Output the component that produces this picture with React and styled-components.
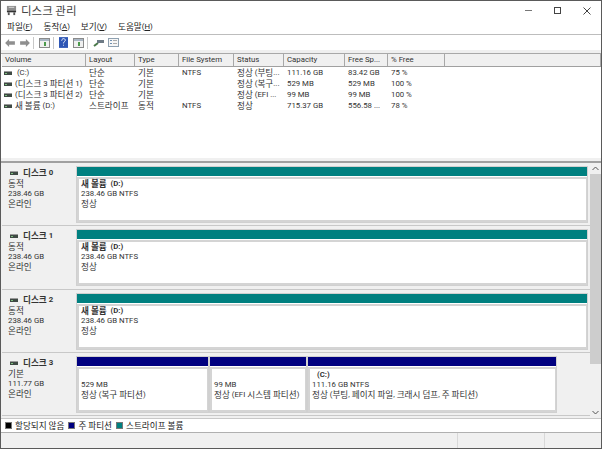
import React from "react";
import styled, { createGlobalStyle } from "styled-components";

const Global = createGlobalStyle`
  html, body { margin: 0; padding: 0; background: #fff; }
  #root { width: 602px; height: 449px; overflow: hidden; }
`;

const Window = styled.div`
  width: 602px;
  height: 449px;
  box-sizing: border-box;
  border: 1px solid #5a5a5a;
  display: flex;
  flex-direction: column;
  background: #fff;
  color: #333;
  font-family: Roboto, "Noto Sans CJK KR", sans-serif;
  font-size: 7.8px;
  line-height: 11px;
  overflow: hidden;
`;

/* hangul in the shot runs wider than the latin next to it */
const Ko = styled.span`
  font-family: "Noto Sans CJK KR", sans-serif;
  font-size: 8.6px;
  line-height: 0.9;
  vertical-align: -0.6px;
`;

const Txt = ({ children }) =>
  String(children)
    .split(/([\uAC00-\uD7A3]+)/)
    .map((s, i) => (i % 2 ? <Ko key={i}>{s}</Ko> : s));

const TitleBar = styled.div`
  height: 19px;
  display: flex;
  align-items: center;
  padding: 0 0 0 5px;
  flex: none;
`;

const TitleText = styled.span`
  flex: 1;
  margin-left: 4px;
  font-family: "Noto Sans CJK KR", sans-serif;
  font-size: 11.5px;
  color: #444;
`;

const WinBtn = styled.div`
  width: 29px;
  height: 19px;
  display: flex;
  align-items: center;
  justify-content: center;
`;

const MenuBar = styled.div`
  height: 15px;
  box-sizing: border-box;
  display: flex;
  align-items: center;
  gap: 11px;
  padding: 0 0 1px 6px;
  border-bottom: 1px solid #bdbdbd;
  flex: none;
  color: #222;
  u { text-decoration-thickness: 1px; }
`;

const Toolbar = styled.div`
  height: 15px;
  display: flex;
  align-items: center;
  padding-left: 1px;
  flex: none;
`;

const ToolBtn = styled.div`
  width: 15px;
  height: 15px;
  display: flex;
  align-items: center;
  justify-content: center;
  flex: none;
`;

const ToolSep = styled.div`
  width: 1px;
  height: 12px;
  background: #c8c8c8;
  margin: 0 2.5px 0 1px;
  flex: none;
`;

const VolumePane = styled.div`
  height: 105px;
  flex: none;
  border-top: 3px solid #efefef;
  box-shadow: inset 0 1px 0 #a8a8a8;
`;

const colTemplate = "84px 49px 44px 55px 50px 61px 43px 57px 1fr";

const HeaderRow = styled.div`
  height: 13px;
  margin: 1px 0 0 1px;
  display: grid;
  grid-template-columns: ${colTemplate};
  background: #f0f0f0;
  border-bottom: 1px solid #a0a0a0;
  box-sizing: border-box;
`;

const HeaderCell = styled.div`
  padding-left: 3px;
  border-right: 1px solid #a8a8a8;
  line-height: 12px;
  white-space: nowrap;
  color: #333;
`;

const VolumeRow = styled.div`
  height: 11px;
  margin-left: 1px;
  display: grid;
  grid-template-columns: ${colTemplate};
`;

const Cell = styled.div`
  padding-left: ${(p) => (p.$first ? 2 : 3)}px;
  white-space: nowrap;
  display: flex;
  align-items: center;
  gap: 3px;
`;

const Splitter = styled.div`
  height: 3px;
  flex: none;
  background: #f0f0f0;
  border-bottom: 2px solid #a0a0a0;
`;

const GraphPane = styled.div`
  flex: 1;
  display: flex;
  min-height: 0;
  background: #f0f0f0;
`;

const DiskList = styled.div`
  flex: 1;
  padding-left: 1px;
`;

const DiskRow = styled.div`
  height: 63.33px;
  box-sizing: border-box;
  display: flex;
  gap: 1px;
  border-bottom: 1px solid #c8c8c8;
  line-height: 10px;
`;

const DiskInfo = styled.div`
  width: 73px;
  flex: none;
  box-sizing: border-box;
  padding: 5px 0 0 6px;
  background: #f0f0f0;
  color: #333;
`;

const DiskName = styled.div`
  display: flex;
  align-items: center;
  gap: 5px;
  padding-left: 2px;
  margin-bottom: 1px;
  font-weight: 700;
`;

const Partitions = styled.div`
  flex: none;
  width: ${(p) => p.$width}px;
  display: flex;
  padding-top: 3px;
  box-sizing: border-box;
  background: #f0f0f0;
`;

const Partition = styled.div`
  flex: ${(p) => (p.$width ? `0 0 ${p.$width}px` : 1)};
  display: flex;
  flex-direction: column;
  height: 57px;
  border: 1px solid #d0d0d0;
  box-sizing: border-box;
  background: #fff;
`;

const Bar = styled.div`
  height: 9px;
  flex: none;
  background: ${(p) => p.$color};
`;

const PartBody = styled.div`
  flex: 1;
  margin-top: 1px;
  border: 2px solid #d4d4d4;
  border-right-width: 1px;
  padding: ${(p) => p.$top || 0}px 0 0 2px;
  white-space: nowrap;
  color: #333;
`;

const PartName = styled.div`
  font-weight: 700;
  height: 10px;
  padding-left: ${(p) => p.$indent || 0}px;
`;

const ScrollTrack = styled.div`
  width: 11px;
  flex: none;
  display: flex;
  flex-direction: column;
  align-items: center;
  background: #f0f0f0;
`;

const ScrollArrow = styled.div`
  height: 11px;
  display: flex;
  align-items: center;
  justify-content: center;
  flex: none;
`;

const ScrollThumb = styled.div`
  width: 100%;
  height: 190px;
  background: #cdcdcd;
  flex: none;
`;

const ScrollGap = styled.div`
  flex: 1;
`;

const Legend = styled.div`
  height: 15px;
  flex: none;
  box-sizing: border-box;
  border-top: 1px solid #c8c8c8;
  border-bottom: 1px solid #b0b0b0;
  display: flex;
  align-items: center;
  padding-left: 4px;
  gap: 4px;
  color: #222;
`;

const LegendItem = styled.div`
  display: flex;
  align-items: center;
  gap: 3px;
`;

const Swatch = styled.div`
  width: 7px;
  height: 7px;
  box-sizing: border-box;
  background: ${(p) => p.$color};
  border: 1px solid #777;
`;

const StatusBar = styled.div`
  height: 15px;
  flex: none;
  display: flex;
  justify-content: flex-end;
  background: #f0f0f0;
`;

const StatusCell = styled.div`
  width: ${(p) => p.$width}px;
  border-left: 1px solid #d8d8d8;
`;

const DriveIcon = () => (
  <svg width="8" height="4" viewBox="0 0 8 4" style={{ flex: "none" }}>
    <rect width="8" height="1" fill="#9a9a9a" />
    <rect y="1" width="8" height="3" fill="#3f4a44" />
    <rect x="1" y="2" width="2" height="1" fill="#7fc07f" />
  </svg>
);

const AppIcon = () => (
  <svg width="11" height="11" viewBox="0 0 12 12">
    <rect x="1" y="1" width="10" height="5" fill="#8d8d8d" />
    <rect x="1" y="6" width="10" height="2" fill="#333" />
    <rect x="2" y="8" width="2" height="3" fill="#555" />
    <rect x="8" y="8" width="2" height="3" fill="#555" />
    <rect x="3" y="2" width="6" height="1" fill="#ddd" />
  </svg>
);

const Arrow = ({ flip }) => (
  <svg width="10" height="8" viewBox="0 0 11 9">
    <path
      d={flip ? "M11 4.5 6.5 0v2.5H0v4h6.5V9z" : "M0 4.5 4.5 0v2.5H11v4H4.5V9z"}
      fill="#8f8f8f"
    />
  </svg>
);

const PaneIcon = () => (
  <svg width="11" height="10" viewBox="0 0 11 10">
    <rect x=".5" y=".5" width="10" height="9" fill="#f0f0f0" stroke="#8a8a8a" />
    <rect x="1" y="1" width="9" height="2" fill="#a9b6c4" />
    <rect x="5" y="4" width="2" height="4" fill="#4c9a4c" />
  </svg>
);

const HelpIcon = () => (
  <svg width="9" height="11" viewBox="0 0 10 12">
    <rect width="10" height="12" fill="#2f57b5" />
    <path d="M3 4c0-3 4-3 4-.5C7 5 5 5 5 7" stroke="#fff" fill="none" />
    <rect x="4.5" y="8.5" width="1" height="1" fill="#fff" />
  </svg>
);

const KeyIcon = () => (
  <svg width="11" height="9" viewBox="0 0 11 9">
    <path d="M1 8 5 5" stroke="#4a7a4a" strokeWidth="2" />
    <rect x="4" y="2" width="7" height="3" fill="#6d7a85" />
  </svg>
);

const ListIcon = () => (
  <svg width="11" height="9" viewBox="0 0 11 9">
    <rect x=".5" y=".5" width="10" height="8" fill="#f6f6f6" stroke="#8ea0b0" />
    <rect x="2" y="2" width="2" height="1" fill="#6f8fb0" />
    <rect x="5" y="2" width="4" height="1" fill="#aaa" />
    <rect x="2" y="5" width="2" height="1" fill="#6f8fb0" />
    <rect x="5" y="5" width="4" height="1" fill="#aaa" />
  </svg>
);

const columns = ["Volume", "Layout", "Type", "File System", "Status", "Capacity", "Free Sp...", "% Free", ""];

const volumes = [
  ["\u00A0(C:)", "단순", "기본", "NTFS", "정상 (부팅...", "111.16 GB", "83.42 GB", "75 %"],
  ["(디스크 3 파티션 1)", "단순", "기본", "", "정상 (복구...", "529 MB", "529 MB", "100 %"],
  ["(디스크 3 파티션 2)", "단순", "기본", "", "정상 (EFI ...", "99 MB", "99 MB", "100 %"],
  ["새 볼륨 (D:)", "스트라이프", "동적", "NTFS", "정상", "715.37 GB", "556.58 ...", "78 %"],
];

const striped = ["디스크 0", "디스크 1", "디스크 2"];

const menus = [
  ["파일", "F"],
  ["동작", "A"],
  ["보기", "V"],
  ["도움말", "H"],
];

const DiskHead = ({ name, kind, size }) => (
  <DiskInfo>
    <DiskName>
      <DriveIcon />
      <span><Txt>{name}</Txt></span>
    </DiskName>
    <div><Txt>{kind}</Txt></div>
    <div>{size}</div>
    <div><Txt>온라인</Txt></div>
  </DiskInfo>
);

export default function App() {
  return (
    <Window>
      <Global />
      <TitleBar>
        <AppIcon />
        <TitleText>디스크 관리</TitleText>
        <WinBtn>
          <svg width="7" height="1"><rect width="7" height="1" fill="#777" /></svg>
        </WinBtn>
        <WinBtn>
          <svg width="7" height="7"><rect x=".5" y=".5" width="6" height="6" fill="none" stroke="#444" /></svg>
        </WinBtn>
        <WinBtn>
          <svg width="8" height="8"><path d="M.5.5l7 7M7.5.5l-7 7" stroke="#444" /></svg>
        </WinBtn>
      </TitleBar>
      <MenuBar>
        {menus.map(([label, key]) => (
          <span key={key}>
            <Ko>{label}</Ko>(<u>{key}</u>)
          </span>
        ))}
      </MenuBar>
      <Toolbar>
        <ToolBtn><Arrow /></ToolBtn>
        <ToolBtn><Arrow flip /></ToolBtn>
        <ToolSep />
        <ToolBtn><PaneIcon /></ToolBtn>
        <ToolSep />
        <ToolBtn><HelpIcon /></ToolBtn>
        <ToolBtn><PaneIcon /></ToolBtn>
        <ToolSep />
        <ToolBtn><KeyIcon /></ToolBtn>
        <ToolBtn><ListIcon /></ToolBtn>
      </Toolbar>
      <VolumePane>
        <HeaderRow>
          {columns.map((c, i) => (
            <HeaderCell key={i}>{c}</HeaderCell>
          ))}
        </HeaderRow>
        {volumes.map((v) => (
          <VolumeRow key={v[0]}>
            {v.map((c, i) => (
              <Cell key={i} $first={i === 0}>
                {i === 0 && <DriveIcon />}
                <span><Txt>{c}</Txt></span>
              </Cell>
            ))}
          </VolumeRow>
        ))}
      </VolumePane>
      <Splitter />
      <GraphPane>
        <DiskList>
          {striped.map((name) => (
            <DiskRow key={name}>
              <DiskHead name={name} kind="동적" size="238.46 GB" />
              <Partitions $width={512}>
                <Partition>
                  <Bar $color="#008080" />
                  <PartBody>
                    <PartName><Txt>{"새 볼륨 \u00A0(D:)"}</Txt></PartName>
                    <div>238.46 GB NTFS</div>
                    <div><Txt>정상</Txt></div>
                  </PartBody>
                </Partition>
              </Partitions>
            </DiskRow>
          ))}
          <DiskRow>
            <DiskHead name="디스크 3" kind="기본" size="111.77 GB" />
            <Partitions $width={481}>
              <Partition $width={133}>
                <Bar $color="#000080" />
                <PartBody $top={1}>
                  <PartName />
                  <div>529 MB</div>
                  <div><Txt>정상 (복구 파티션)</Txt></div>
                </PartBody>
              </Partition>
              <Partition $width={98}>
                <Bar $color="#000080" />
                <PartBody $top={1}>
                  <PartName />
                  <div>99 MB</div>
                  <div><Txt>정상 (EFI 시스템 파티션)</Txt></div>
                </PartBody>
              </Partition>
              <Partition>
                <Bar $color="#000080" />
                <PartBody $top={1}>
                  <PartName $indent={5}>(C:)</PartName>
                  <div>111.16 GB NTFS</div>
                  <div><Txt>정상 (부팅, 페이지 파일, 크래시 덤프, 주 파티션)</Txt></div>
                </PartBody>
              </Partition>
            </Partitions>
          </DiskRow>
        </DiskList>
        <ScrollTrack>
          <ScrollArrow>
            <svg width="7" height="5"><path d="M.5 4 3.5 1l3 3" fill="none" stroke="#555" /></svg>
          </ScrollArrow>
          <ScrollThumb />
          <ScrollGap />
          <ScrollArrow>
            <svg width="7" height="5"><path d="M.5 1l3 3 3-3" fill="none" stroke="#555" /></svg>
          </ScrollArrow>
        </ScrollTrack>
      </GraphPane>
      <Legend>
        <LegendItem><Swatch $color="#000" /><span><Txt>할당되지 않음</Txt></span></LegendItem>
        <LegendItem><Swatch $color="#000080" /><span><Txt>주 파티션</Txt></span></LegendItem>
        <LegendItem><Swatch $color="#008080" /><span><Txt>스트라이프 볼륨</Txt></span></LegendItem>
      </Legend>
      <StatusBar>
        <StatusCell $width={86} />
        <StatusCell $width={56} />
      </StatusBar>
    </Window>
  );
}
